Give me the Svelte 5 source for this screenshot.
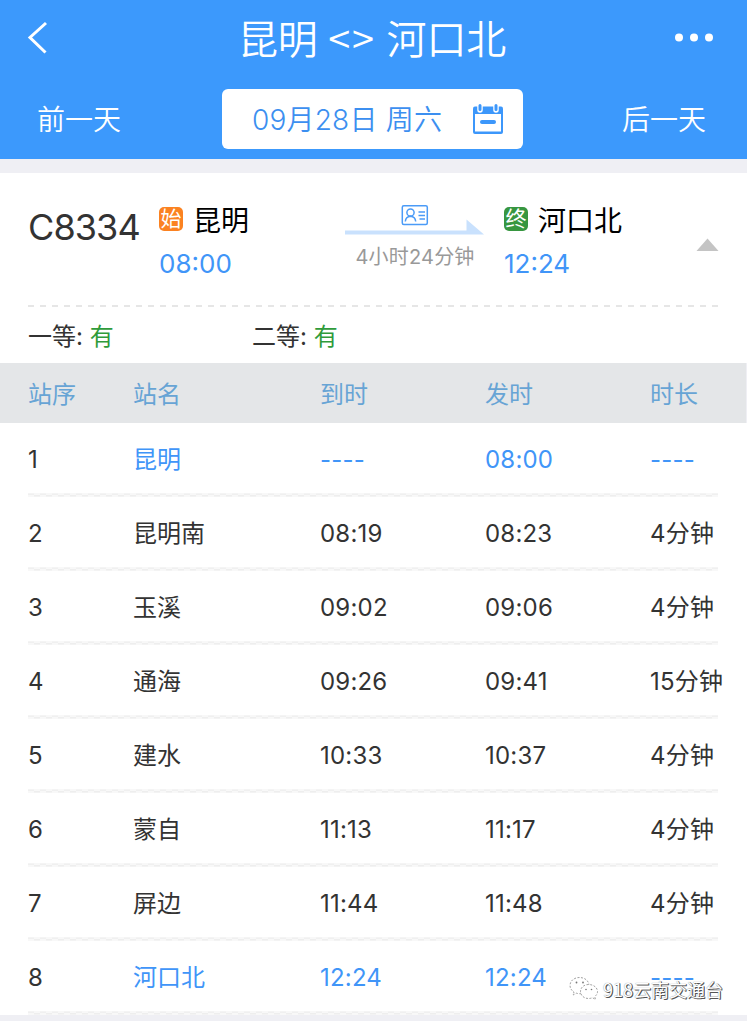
<script lang="ts">
  type Stop = { name: string; arrive: string; depart: string; stay: string; end?: boolean };

  const stops: Stop[] = [
    { name: "昆明", arrive: "----", depart: "08:00", stay: "----", end: true },
    { name: "昆明南", arrive: "08:19", depart: "08:23", stay: "4分钟" },
    { name: "玉溪", arrive: "09:02", depart: "09:06", stay: "4分钟" },
    { name: "通海", arrive: "09:26", depart: "09:41", stay: "15分钟" },
    { name: "建水", arrive: "10:33", depart: "10:37", stay: "4分钟" },
    { name: "蒙自", arrive: "11:13", depart: "11:17", stay: "4分钟" },
    { name: "屏边", arrive: "11:44", depart: "11:48", stay: "4分钟" },
    { name: "河口北", arrive: "12:24", depart: "12:24", stay: "----", end: true },
  ];
</script>

<div class="page">
  <header>
    <div class="nav">
      <svg class="back" width="20" height="34" viewBox="0 0 20 34">
        <path d="M19 2 3 16.500l15.500 15" fill="none" stroke="#fff" stroke-width="3" />
      </svg>
      <h1>昆明 <span class="swap">&lt;&gt;</span> 河口北</h1>
      <svg class="more" width="40" height="10" viewBox="0 0 40 10">
        <circle cx="5" cy="4.500" r="4" fill="#fff" />
        <circle cx="20" cy="4.500" r="4" fill="#fff" />
        <circle cx="35" cy="4.500" r="4" fill="#fff" />
      </svg>
    </div>
    <div class="days">
      <span class="prev">前一天</span>
      <div class="date">
        <span>09月28日 周六</span>
        <svg width="32" height="32" viewBox="0 0 32 32">
          <path d="M1 5.500Q1 3.500 3 3.500H29Q31 3.500 31 5.500V29Q31 31 29 31H3Q1 31 1 29Z" fill="#3c97fb" />
          <path d="M3 11H29V28.500H3Z" fill="#fff" />
          <path d="M8 2.500V7M24 2.500V7" stroke="#fff" stroke-width="5.500" stroke-linecap="round" />
          <path d="M8 2.500V6.500M24 2.500V6.500" stroke="#3c97fb" stroke-width="3" stroke-linecap="round" />
          <path d="M10 19H22" stroke="#3c97fb" stroke-width="4" stroke-linecap="round" />
        </svg>
      </div>
      <span class="next">后一天</span>
    </div>
  </header>

  <section class="train">
    <div class="summary">
      <div class="code">C8334</div>
      <div class="station">
        <div class="place"><i class="tag start">始</i>昆明</div>
        <div class="time">08:00</div>
      </div>
      <div class="trip">
        <svg width="140" height="32" viewBox="0 0 140 32">
          <rect x="57.300" y="1.700" width="25" height="18.800" rx="1.500" fill="none" stroke="#4b9bf7" stroke-width="1.500" />
          <g fill="none" stroke="#4b9bf7" stroke-width="1.500">
            <circle cx="65.500" cy="8.500" r="3.600" />
            <path d="M60.300 17.500Q60.700 12.700 65.500 12.300Q70.300 12.700 70.700 17.500M73.500 8H80M73.500 11.500H80M74.500 15H80" />
          </g>
          <path d="M0 26.500H121.500V15.500L139 30.500H0Z" fill="#c9e1fd" />
        </svg>
        <div class="duration">4小时24分钟</div>
      </div>
      <div class="station">
        <div class="place"><i class="tag final">终</i>河口北</div>
        <div class="time">12:24</div>
      </div>
      <svg class="fold" width="24" height="13" viewBox="0 0 24 13">
        <path d="M0.500 13 11.500 0.500 22.500 13Z" fill="#c4c4c4" />
      </svg>
    </div>
    <svg class="rule" width="690" height="2">
      <path d="M0 1H690" stroke="#e6e6e6" stroke-width="2" stroke-dasharray="6 6" />
    </svg>
    <div class="seats">
      <div>一等: <b>有</b></div>
      <div>二等: <b>有</b></div>
    </div>
  </section>

  <div class="row head">
    <span>站序</span><span>站名</span><span>到时</span><span>发时</span><span>时长</span>
  </div>
  {#each stops as s, i (s.name)}
    <div class="row stop" class:end={s.end}>
      <span class="no">{i + 1}</span>
      <span>{s.name}</span>
      <span class="clock">{s.arrive}</span>
      <span class="clock">{s.depart}</span>
      <span class="clock">{s.stay}</span>
      <svg class="line" width="690" height="4">
        <path d="M0 2H690" stroke="#f8f8f8" stroke-width="4" />
        <path d="M0 1.200H690" stroke="#f0f0f0" stroke-width="1.500" stroke-dasharray="6 6" />
        <path d="M6 2.700H690" stroke="#eeeeee" stroke-width="1.500" stroke-dasharray="6 6" />
      </svg>
    </div>
  {/each}

  <div class="account">
    <svg width="30" height="26" viewBox="0 0 30 26">
      <g fill="#fff" stroke="#888" stroke-width="0.800" stroke-dasharray="2 1.500">
        <path d="M10.500 1.500C5 1.500 1 5 1 9.500C1 12.300 2.500 14.500 5 16L4 19L7.500 17.200Q10 18 12 17.500C17 17 20 13.500 20 9.500C20 5 16 1.500 10.500 1.500Z" />
        <path d="M19.500 8.500C15 8.500 11.500 11.500 11.500 15.500C11.500 19.500 15 22.500 19.500 22.500Q21.500 22.500 23.500 21.700L26.500 23.500L25.700 20.500Q28.500 18.500 28.500 15.500C28.500 11.500 24.500 8.500 19.500 8.500Z" />
      </g>
      <g fill="#777">
        <circle cx="7.500" cy="6.500" r="0.900" /><circle cx="14" cy="6.500" r="0.900" />
        <circle cx="17" cy="13.500" r="0.800" /><circle cx="22.500" cy="13.500" r="0.800" />
      </g>
    </svg>
    <span>918云南交通台</span>
  </div>
</div>

<style>
  :global(body) {
    background: #efeff4;
  }

  .page {
    position: relative;
    width: 747px;
    height: 1021px;
    overflow: hidden;
    font-family: Inter, "Noto Sans CJK SC", sans-serif;
    font-size: 24px;
    font-weight: 370;
    color: #333;
    white-space: nowrap;
  }

  header {
    height: 159px;
    background: #3c99fc;
    color: #fff;
  }

  .nav {
    display: flex;
    align-items: center;
    height: 76px;
    padding: 0 33px 0 27px;
  }

  h1 {
    flex: 1;
    margin: 0 0 0 23px;
    font-size: 40px;
    font-weight: 350;
    line-height: 74px;
    height: 76px;
    text-align: center;
    word-spacing: -0.5px;
    letter-spacing: -0.2px;
  }

  .swap {
    font-family: "Noto Sans CJK SC", sans-serif;
    letter-spacing: 2px;
  }

  .days {
    display: grid;
    grid-template-columns: 222px 301px 1fr;
    grid-template-rows: 60px;
    align-items: center;
    margin-top: 13px;
    height: 60px;
    font-size: 28px;
    font-weight: 350;
    line-height: 60px;
  }

  .days span {
    padding-top: 2px;
  }

  .prev {
    padding-left: 37px;
  }

  .next {
    padding-left: 99px;
  }

  .date {
    display: flex;
    align-items: center;
    justify-content: space-between;
    height: 60px;
    box-sizing: border-box;
    padding: 0 19px 0 30px;
    border-radius: 6px;
    background: #fff;
    color: #3c8ff0;
    letter-spacing: 0.2px;
  }

  .train {
    margin-top: 14px;
    height: 190px;
    background: #fff;
  }

  .summary {
    display: grid;
    grid-template-columns: 131px 186px 159px 192px 24px;
    height: 132px;
    padding-left: 28px;
  }

  .code {
    padding-top: 27px;
    font-size: 36px;
    line-height: 54px;
    letter-spacing: -0.9px;
  }

  .place {
    display: flex;
    align-items: center;
    gap: 10px;
    height: 40px;
    margin-top: 28px;
    color: #000;
    font-size: 28px;
    line-height: 44px;
  }

  .tag {
    width: 24px;
    height: 24px;
    margin-top: -5px;
    border-radius: 5px;
    color: #fff;
    font-size: 21px;
    font-style: normal;
    line-height: 23px;
    text-align: center;
  }

  .start {
    background: #fb8221;
  }

  .final {
    background: #379640;
  }

  .time {
    margin-top: 5px;
    color: #4095f8;
    font-size: 26px;
    line-height: 36px;
  }

  .trip {
    padding-top: 31px;
  }

  .trip svg {
    display: block;
  }

  .duration {
    width: 140px;
    margin-top: 7px;
    color: #999;
    font-size: 20px;
    line-height: 28px;
    text-align: center;
    letter-spacing: 0.2px;
  }

  .fold {
    margin-top: 65px;
  }

  .rule {
    display: block;
    margin: 0 28px;
  }

  .seats {
    display: grid;
    grid-template-columns: 224px 1fr;
    padding: 12px 28px 0;
    line-height: 36px;
  }

  .seats b {
    color: #2f9b3b;
    font-weight: 370;
  }

  .row {
    display: grid;
    grid-template-columns: 105px 187px 165px 165px 1fr;
    align-items: center;
    padding-left: 28px;
    line-height: 30px;
  }

  .row span {
    padding-top: 4px;
  }

  .head {
    height: 60px;
    margin-right: 1px;
    background: #e4e6e8;
    color: #67a4d5;
  }

  .stop {
    grid-template-rows: 70px 4px;
    height: 74px;
    background: #fff;
  }

  .end {
    color: #4095f8;
  }

  .no {
    color: #333;
  }

  .clock {
    letter-spacing: 0.2px;
  }

  .line {
    grid-column: 1 / -1;
  }

  .account {
    position: absolute;
    left: 569px;
    top: 975px;
    display: flex;
    align-items: center;
    gap: 4px;
    height: 28px;
    color: #fff;
    font-family: "Noto Sans CJK SC", sans-serif;
    font-size: 18px;
    text-shadow: 1px 1px 0 #555, 1px 0 0 #777, 0 0 1px #777;
  }
</style>
